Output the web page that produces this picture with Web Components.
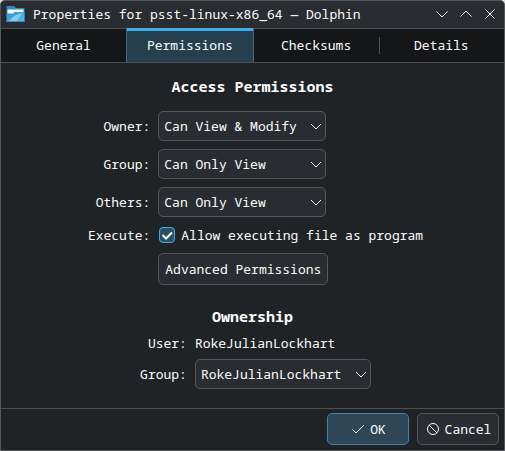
<!DOCTYPE html>
<html lang="en">
<head>
<meta charset="utf-8">
<meta name="viewport" content="width=device-width, initial-scale=1">
<title>Properties for psst-linux-x86_64 — Dolphin</title>
<style>
  body {
    margin: 0;
    background-color: #d8d9da;
    color: #fcfcfc;
    font: 13px/20px "Noto Sans Mono", "Noto Mono", "DejaVu Sans Mono", monospace;
  }
</style>
</head>
<body>
<properties-window caption="Properties for psst-linux-x86_64 — Dolphin">
  <tab-strip slot="tabs" tabs="General,Permissions,Checksums,Details" current="Permissions"></tab-strip>

  <form-section heading="Access Permissions">
    <select-row label="Owner:" options="Can Only View|Can View &amp; Modify" value="Can View &amp; Modify"></select-row>
    <select-row label="Group:" options="Can Only View|Can View &amp; Modify" value="Can Only View"></select-row>
    <select-row label="Others:" options="Can Only View|Can View &amp; Modify" value="Can Only View"></select-row>
    <check-row label="Execute:">Allow executing file as program</check-row>
    <button-row>Advanced Permissions</button-row>
  </form-section>

  <form-section heading="Ownership" class="compact">
    <text-row label="User:">RokeJulianLockhart</text-row>
    <select-row label="Group:" options="RokeJulianLockhart" value="RokeJulianLockhart"></select-row>
  </form-section>

  <push-button slot="actions" icon="ok" primary>OK</push-button>
  <push-button slot="actions" icon="cancel">Cancel</push-button>
</properties-window>

<script>
const rowStyle = `
  * {
    box-sizing: border-box;
  }
  :host {
    display: contents;
  }
  .name {
    justify-self: end;
    align-self: center;
  }
`;

class PropertiesWindow extends HTMLElement {
  constructor() {
    super();
    this.shadowDOM = this.attachShadow({mode: 'open'});
  }

  connectedCallback() {
    this.shadowDOM.innerHTML = `
      <style>
        * {
          box-sizing: border-box;
        }
        :host {
          display: flex;
          flex-direction: column;
          box-sizing: border-box;
          min-height: 100vh;
          border: 1px solid #53575a;
          border-radius: 5px 5px 0 0;
          overflow: hidden;
          background-color: #202326;
        }
        header {
          display: flex;
          align-items: center;
          gap: 8px;
          height: 28px;
          padding: 0 6px 1px 5px;
          border-bottom: 1px solid #4d5053;
          background-color: #292c30;
        }
        h1 {
          flex: 1;
          margin: 0;
          font: inherit;
          white-space: nowrap;
        }
        nav {
          display: flex;
          gap: 8px;
        }
        nav button {
          width: 16px;
          height: 16px;
          padding: 0;
          border: 0;
          background: none;
          color: inherit;
        }
        svg {
          display: block;
        }
        main {
          flex: 1;
          display: flex;
          flex-direction: column;
          gap: 21px;
          padding: 13px 0;
        }
        footer {
          display: flex;
          justify-content: flex-end;
          gap: 8px;
          padding: 4px 5px 5px;
          border-top: 1px solid #4d5053;
        }
      </style>

      <header>
        <svg width="19" height="18" viewBox="0 0 19 18" aria-hidden="true">
          <defs>
            <linearGradient id="front" x1="0" y1="0" x2="1" y2="1">
              <stop offset="0" stop-color="#2f8fcb"/>
              <stop offset="1" stop-color="#5cc0ee"/>
            </linearGradient>
          </defs>
          <path d="M.5 1h7.500l2 2h8.500v9H.5z" fill="#3089bf"/>
          <path d="M1.500 4.500h16V10h-16z" fill="#f4f6f7"/>
          <path d="M.5 8.500h6.500l1.500-1.500h10v10H.5z" fill="url(#front)"/>
          <path d="M3 16l5-5 2-1 6-2-2 4-3 4z" fill="#85c9ec"/>
          <path d="M.5 16h18v1H.5z" fill="#2f8fc6"/>
        </svg>
        <h1>${this.getAttribute('caption')}</h1>
        <nav>
          <button aria-label="Minimize"><svg width="16" height="16" fill="none" stroke="currentColor"><path d="M2.500 5.500L8 11l5.500-5.500"/></svg></button>
          <button aria-label="Maximize"><svg width="16" height="16" fill="none" stroke="currentColor"><path d="M2.500 10.500L8 5l5.500 5.500"/></svg></button>
          <button aria-label="Close"><svg width="16" height="16" fill="none" stroke="currentColor"><path d="M3.500 3.500l9 9M12.500 3.500l-9 9"/></svg></button>
        </nav>
      </header>
      <slot name="tabs"></slot>
      <main><slot></slot></main>
      <footer><slot name="actions"></slot></footer>
    `;
  }
}

class TabStrip extends HTMLElement {
  constructor() {
    super();
    this.shadowDOM = this.attachShadow({mode: 'open'});
  }

  connectedCallback() {
    const current = this.getAttribute('current');
    const tabs = this.getAttribute('tabs').split(',');
    this.shadowDOM.innerHTML = `
      <style>
        :host {
          display: block;
          border-bottom: 1px solid #4d5053;
          background-color: #141618;
        }
        div {
          display: flex;
        }
        button {
          flex: 1 1 0;
          display: flex;
          align-items: center;
          justify-content: center;
          height: 33px;
          padding: 0 0 2px;
          border: 0;
          background: none;
          color: inherit;
          font: inherit;
        }
        /* the highlight covers the line under the title bar */
        button[aria-selected="true"] {
          height: 34px;
          margin-top: -1px;
          padding-bottom: 1px;
          border: solid #47667a;
          border-width: 0 1px;
          background-color: #263f4e;
          box-shadow: inset 0 3px #3daee9;
        }
        /* short divider between two unselected tabs */
        button[aria-selected="false"] + button[aria-selected="false"] {
          background: linear-gradient(#4d5053, #4d5053) left center / 1px 17px no-repeat;
        }
      </style>
      <div role="tablist">
        ${tabs.map((tab) => `<button role="tab" aria-selected="${tab === current}">${tab}</button>`).join('')}
      </div>
    `;
  }
}

class FormSection extends HTMLElement {
  constructor() {
    super();
    this.shadowDOM = this.attachShadow({mode: 'open'});
  }

  connectedCallback() {
    this.shadowDOM.innerHTML = `
      <style>
        :host {
          display: flex;
          flex-direction: column;
          gap: 15px;
        }
        :host(.compact) {
          gap: 9px;
        }
        h2 {
          margin: 0;
          font-size: 15px;
          font-weight: bold;
          line-height: 20px;
          text-align: center;
        }
        div {
          display: grid;
          grid-template-columns: auto auto;
          justify-content: center;
          gap: 8px;
          padding-left: 6px;
        }
      </style>
      <h2>${this.getAttribute('heading')}</h2>
      <div><slot></slot></div>
    `;
  }
}

class SelectRow extends HTMLElement {
  constructor() {
    super();
    this.shadowDOM = this.attachShadow({mode: 'open'});
  }

  connectedCallback() {
    const value = this.getAttribute('value');
    const options = this.getAttribute('options').split('|');
    this.shadowDOM.innerHTML = `
      <style>
        ${rowStyle}
        .box {
          display: grid;
          justify-self: start;
          align-items: center;
        }
        select, svg {
          grid-area: 1 / 1;
        }
        select {
          appearance: none;
          height: 30px;
          margin: 0;
          padding: 0 28px 0 5px;
          border: 1px solid #53575a;
          border-radius: 5px;
          background-color: #292c30;
          color: inherit;
          font: inherit;
        }
        svg {
          justify-self: end;
          margin-right: 2px;
          pointer-events: none;
        }
      </style>
      <label class="name" for="field">${this.getAttribute('label')}</label>
      <div class="box">
        <select id="field"></select>
        <svg width="16" height="16" fill="none" stroke="#fcfcfc"><path d="M3 6l5 5 5-5"/></svg>
      </div>
    `;
    const select = this.shadowDOM.querySelector('select');
    options.forEach((text) => select.add(new Option(text, text, text === value, text === value)));
  }
}

class CheckRow extends HTMLElement {
  constructor() {
    super();
    this.shadowDOM = this.attachShadow({mode: 'open'});
  }

  connectedCallback() {
    this.shadowDOM.innerHTML = `
      <style>
        ${rowStyle}
        .check {
          display: flex;
          align-items: center;
          gap: 6px;
        }
        .mark {
          display: grid;
          margin-left: 1px;
        }
        input, svg {
          grid-area: 1 / 1;
        }
        input {
          appearance: none;
          width: 16px;
          height: 16px;
          margin: 0;
          border: 1px solid #3daee9;
          border-radius: 4px;
          background-color: #2b4f64;
        }
        svg {
          visibility: hidden;
          pointer-events: none;
        }
        input:checked + svg {
          visibility: visible;
        }
      </style>
      <label class="name" for="field">${this.getAttribute('label')}</label>
      <label class="check">
        <span class="mark">
          <input type="checkbox" id="field" checked>
          <svg width="16" height="16" fill="none" stroke="#fcfcfc" stroke-width="2"><path d="M3.500 8l3.500 3.500 6-6"/></svg>
        </span>
        <slot></slot>
      </label>
    `;
  }
}

class TextRow extends HTMLElement {
  constructor() {
    super();
    this.shadowDOM = this.attachShadow({mode: 'open'});
  }

  connectedCallback() {
    this.shadowDOM.innerHTML = `
      <style>
        ${rowStyle}
        span {
          line-height: 16px;
        }
      </style>
      <span class="name">${this.getAttribute('label')}</span>
      <span><slot></slot></span>
    `;
  }
}

class ButtonRow extends HTMLElement {
  constructor() {
    super();
    this.shadowDOM = this.attachShadow({mode: 'open'});
  }

  connectedCallback() {
    this.shadowDOM.innerHTML = `
      <style>
        ${rowStyle}
        push-button {
          grid-column: 2;
          justify-self: start;
        }
      </style>
      <push-button><slot></slot></push-button>
    `;
  }
}

const icons = {
  ok: '<path d="M2.500 8.500l3.500 3.500 8-8"/>',
  cancel: '<circle cx="8" cy="8" r="5.500"/><path d="M4 4l8 8"/>'
};

class PushButton extends HTMLElement {
  constructor() {
    super();
    this.shadowDOM = this.attachShadow({mode: 'open'});
  }

  connectedCallback() {
    const icon = icons[this.getAttribute('icon')];
    this.shadowDOM.innerHTML = `
      <style>
        :host {
          display: block;
        }
        button {
          display: flex;
          align-items: center;
          justify-content: center;
          gap: 4px;
          box-sizing: border-box;
          min-width: 82px;
          height: 32px;
          padding: 0 6px;
          border: 1px solid #53575a;
          border-radius: 5px;
          background-color: #292c30;
          color: inherit;
          font: inherit;
        }
        :host([primary]) button {
          border-color: #4082a6;
          background-color: #2e4655;
        }
      </style>
      <button>
        ${icon ? `<svg width="16" height="16" fill="none" stroke="currentColor">${icon}</svg>` : ''}
        <slot></slot>
      </button>
    `;
  }
}

customElements.define('properties-window', PropertiesWindow);
customElements.define('tab-strip', TabStrip);
customElements.define('form-section', FormSection);
customElements.define('select-row', SelectRow);
customElements.define('check-row', CheckRow);
customElements.define('text-row', TextRow);
customElements.define('push-button', PushButton);
customElements.define('button-row', ButtonRow);
</script>
</body>
</html>
